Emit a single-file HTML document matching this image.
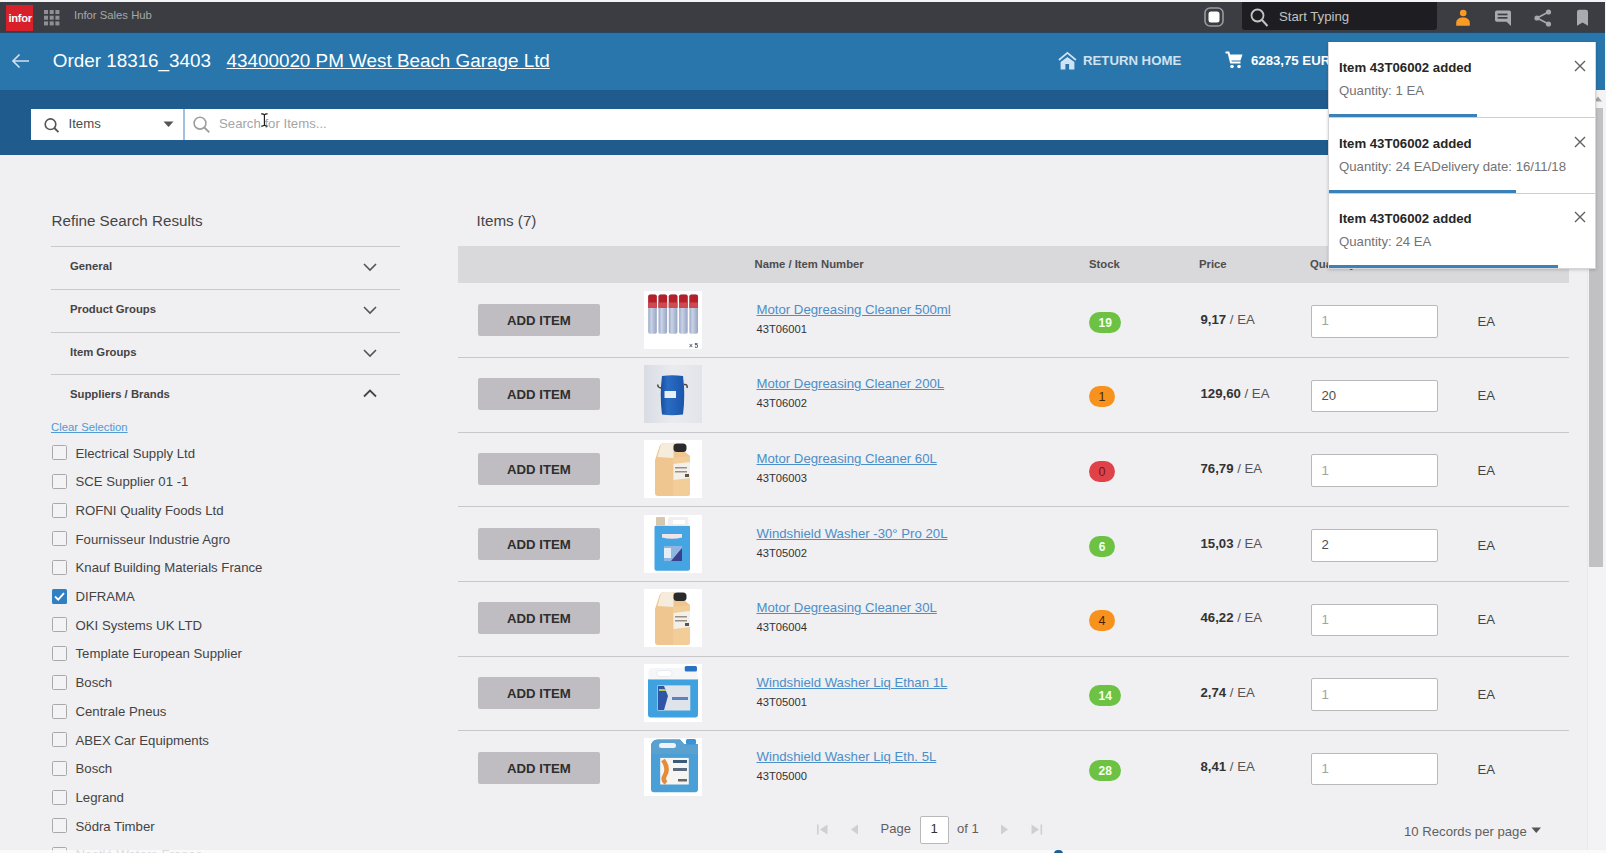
<!DOCTYPE html><html><head><meta charset="utf-8"><style>
*{box-sizing:border-box;margin:0;padding:0}
html,body{width:1606px;height:853px;overflow:hidden}
body{font-family:"Liberation Sans",sans-serif;background:#f0eff2;position:relative;color:#333}
.a{position:absolute}
.t{position:absolute;white-space:nowrap;line-height:1}
svg{position:absolute;overflow:visible}
</style></head><body>
<div class="a" style="left:0;top:0;width:1606px;height:2px;background:#f4f4f6"></div>
<div class="a" style="left:0;top:2px;width:1605px;height:30px;background:#3c3d42"></div>
<div class="a" style="left:6px;top:5px;width:27px;height:26px;background:#d8202a"></div>
<div class="t" style="left:8.5px;top:12.8px;font-size:11.2px;font-weight:bold;color:#fff;letter-spacing:-0.3px">infor</div>
<svg style="left:0;top:0" width="80" height="32"><rect x="44.0" y="10.0" width="4" height="4" fill="#8f8f94"/><rect x="44.0" y="15.7" width="4" height="4" fill="#8f8f94"/><rect x="44.0" y="21.4" width="4" height="4" fill="#8f8f94"/><rect x="49.7" y="10.0" width="4" height="4" fill="#8f8f94"/><rect x="49.7" y="15.7" width="4" height="4" fill="#8f8f94"/><rect x="49.7" y="21.4" width="4" height="4" fill="#8f8f94"/><rect x="55.4" y="10.0" width="4" height="4" fill="#8f8f94"/><rect x="55.4" y="15.7" width="4" height="4" fill="#8f8f94"/><rect x="55.4" y="21.4" width="4" height="4" fill="#8f8f94"/></svg>
<div class="t" style="left:74px;top:10px;font-size:11.3px;color:#a7a7ab">Infor Sales Hub</div>
<svg style="left:1204px;top:7px" width="21" height="21"><rect x="1" y="1" width="18" height="18" rx="5" fill="none" stroke="#9a9a9e" stroke-width="1.6"/><rect x="4.5" y="4.5" width="11" height="11" rx="2.5" fill="#fff"/></svg>
<div class="a" style="left:1242px;top:2px;width:195px;height:28px;background:#1e1e22;border-radius:0 0 3px 3px"></div>
<svg style="left:1250px;top:8px" width="20" height="20"><circle cx="7.5" cy="7.5" r="6" fill="none" stroke="#c4c4c4" stroke-width="1.8"/><line x1="12" y1="12" x2="17.5" y2="18" stroke="#c4c4c4" stroke-width="2"/></svg>
<div class="t" style="left:1279px;top:10px;font-size:13.2px;color:#c2c2c2">Start Typing</div>
<svg style="left:1455px;top:9px" width="16" height="17"><circle cx="8.2" cy="4" r="3.3" fill="#f99b25"/><path d="M1.2 16.8 V14 C1.2 10.5 4 8.6 8 8.6 C12 8.6 14.8 10.5 14.8 14 V16.8 Z" fill="#f99b25"/></svg>
<svg style="left:1495px;top:9.5px" width="17" height="17"><path d="M1.8 0.5 H14.2 Q16 0.5 16 2.3 V16 L11.5 11.8 H1.8 Q0 11.8 0 10 V2.3 Q0 0.5 1.8 0.5 Z" fill="#a9a9ae"/><rect x="2.7" y="3.6" width="9.8" height="1.7" fill="#3c3d42"/><rect x="2.7" y="7" width="9.8" height="1.7" fill="#3c3d42"/></svg>
<svg style="left:1534px;top:9px" width="18" height="18"><circle cx="14.5" cy="3" r="2.6" fill="#a7a7ab"/><circle cx="3" cy="9" r="2.6" fill="#a7a7ab"/><circle cx="14.5" cy="15" r="2.6" fill="#a7a7ab"/><path d="M3 9 L14.5 3 M3 9 L14.5 15" stroke="#a9a9ae" stroke-width="1.5"/></svg>
<svg style="left:1576px;top:9px" width="13" height="18"><path d="M1 3 Q1 0.8 3.2 0.8 H9.8 Q12 0.8 12 3 V16.8 L6.5 13.6 L1 16.8 Z" fill="#a9a9ae"/></svg>
<div class="a" style="left:1605px;top:0;width:1px;height:90px;background:#f4f4f6"></div>
<div class="a" style="left:0;top:32px;width:1605px;height:58px;background:#2876ab"></div>
<div class="a" style="left:0;top:31.6px;width:1605px;height:1px;background:#27465f"></div>
<svg style="left:11px;top:53px" width="20" height="16"><path d="M18 8 H2 M8.5 1.5 L2 8 L8.5 14.5" fill="none" stroke="#cfe0ef" stroke-width="1.7"/></svg>
<div class="t" style="left:52.8px;top:52.2px;font-size:18.85px;color:#fff">Order 18316_3403</div>
<div class="t" style="left:226.5px;top:52.2px;font-size:18.85px;color:#fff;text-decoration:underline">43400020 PM West Beach Garage Ltd</div>
<svg style="left:1058px;top:52px" width="19" height="19"><path d="M0.9 8 L9.4 0.9 L17.9 8" fill="none" stroke="#cfe3f5" stroke-width="1.7"/><path d="M2.6 10 L9.4 5 L16.4 10 V17.5 H11.1 V12 H7.4 V17.5 H2.6 Z" fill="#cfe3f5"/></svg>
<div class="t" style="left:1083px;top:54px;font-size:13.2px;font-weight:bold;color:#d0e2f2">RETURN HOME</div>
<svg style="left:1225px;top:51px" width="19" height="19"><path d="M0.5 1.5 H3.5 L6 11.5 H15.5" fill="none" stroke="#fff" stroke-width="2"/><path d="M4.2 3.5 H17.5 L15.5 9.5 H5.5 Z" fill="#fff"/><circle cx="7" cy="15.5" r="1.8" fill="#fff"/><circle cx="14" cy="15.5" r="1.8" fill="#fff"/></svg>
<div class="t" style="left:1251px;top:54px;font-size:13.2px;font-weight:bold;color:#fff">6283,75 EUR</div>
<div class="a" style="left:0;top:90px;width:1585px;height:65px;background:#1f5b8c"></div>
<div class="a" style="left:31px;top:109px;width:152px;height:30.5px;background:#fff"></div>
<svg style="left:44px;top:117.5px" width="18" height="16"><circle cx="6.5" cy="6.2" r="5.3" fill="none" stroke="#555" stroke-width="1.6"/><line x1="10.3" y1="10" x2="14.5" y2="14.2" stroke="#555" stroke-width="1.8"/></svg>
<div class="t" style="left:68.5px;top:116.5px;font-size:13.2px;color:#4a4a4a">Items</div>
<svg style="left:163px;top:121px" width="12" height="7"><path d="M0.5 0.5 H10.5 L5.5 6 Z" fill="#555"/></svg>
<div class="a" style="left:183px;top:109px;width:2px;height:30.5px;background:#9fc0de"></div>
<div class="a" style="left:185px;top:109px;width:1400px;height:30.5px;background:#fff"></div>
<svg style="left:193px;top:115.5px" width="20" height="18"><circle cx="7" cy="7.2" r="5.9" fill="none" stroke="#9d9d9d" stroke-width="1.6"/><line x1="11.3" y1="11.5" x2="16.3" y2="16.3" stroke="#9d9d9d" stroke-width="1.8"/></svg>
<div class="t" style="left:219px;top:116.5px;font-size:13.2px;color:#a5a5a5">Search for Items...</div>
<svg style="left:260px;top:113px" width="9" height="15"><path d="M1.2 0.9 Q3.3 0.6 4.4 1.8 Q5.5 0.6 7.6 0.9 M4.4 1.8 V12.2 M1.2 13.1 Q3.3 13.4 4.4 12.2 Q5.5 13.4 7.6 13.1" fill="none" stroke="#1a1a1a" stroke-width="1.15"/></svg>
<div class="t" style="left:51.5px;top:213px;font-size:15.2px;color:#454545">Refine Search Results</div>
<div class="a" style="left:51px;top:246px;width:349px;height:1px;background:#c9c9cc"></div>
<div class="a" style="left:51px;top:289px;width:349px;height:1px;background:#c9c9cc"></div>
<div class="a" style="left:51px;top:332px;width:349px;height:1px;background:#c9c9cc"></div>
<div class="a" style="left:51px;top:374px;width:349px;height:1px;background:#c9c9cc"></div>
<div class="t" style="left:70px;top:260.7px;font-size:11.3px;font-weight:bold;color:#444">General</div>
<svg style="left:363px;top:262.5px" width="15" height="9"><path d="M1 1 L7 7 L13 1" fill="none" stroke="#555" stroke-width="1.6"/></svg>
<div class="t" style="left:70px;top:304.2px;font-size:11.3px;font-weight:bold;color:#444">Product Groups</div>
<svg style="left:363px;top:306.0px" width="15" height="9"><path d="M1 1 L7 7 L13 1" fill="none" stroke="#555" stroke-width="1.6"/></svg>
<div class="t" style="left:70px;top:346.7px;font-size:11.3px;font-weight:bold;color:#444">Item Groups</div>
<svg style="left:363px;top:348.5px" width="15" height="9"><path d="M1 1 L7 7 L13 1" fill="none" stroke="#555" stroke-width="1.6"/></svg>
<div class="t" style="left:70px;top:388.7px;font-size:11.3px;font-weight:bold;color:#444">Suppliers / Brands</div>
<svg style="left:363px;top:389.0px" width="15" height="9"><path d="M1 7.5 L7 1.5 L13 7.5" fill="none" stroke="#444" stroke-width="1.8"/></svg>
<div class="t" style="left:51px;top:422px;font-size:11.3px;color:#529ad3;text-decoration:underline">Clear Selection</div>
<div class="a" style="left:52px;top:445.2px;width:15px;height:15px;border:1px solid #a9a9ac;border-radius:1.5px;background:#f3f3f5"></div>
<div class="t" style="left:75.5px;top:446.5px;font-size:13.2px;color:#434343">Electrical Supply Ltd</div>
<div class="a" style="left:52px;top:473.9px;width:15px;height:15px;border:1px solid #a9a9ac;border-radius:1.5px;background:#f3f3f5"></div>
<div class="t" style="left:75.5px;top:475.2px;font-size:13.2px;color:#434343">SCE Supplier 01 -1</div>
<div class="a" style="left:52px;top:502.6px;width:15px;height:15px;border:1px solid #a9a9ac;border-radius:1.5px;background:#f3f3f5"></div>
<div class="t" style="left:75.5px;top:503.9px;font-size:13.2px;color:#434343">ROFNI Quality Foods Ltd</div>
<div class="a" style="left:52px;top:531.3px;width:15px;height:15px;border:1px solid #a9a9ac;border-radius:1.5px;background:#f3f3f5"></div>
<div class="t" style="left:75.5px;top:532.6px;font-size:13.2px;color:#434343">Fournisseur Industrie Agro</div>
<div class="a" style="left:52px;top:560.0px;width:15px;height:15px;border:1px solid #a9a9ac;border-radius:1.5px;background:#f3f3f5"></div>
<div class="t" style="left:75.5px;top:561.3px;font-size:13.2px;color:#434343">Knauf Building Materials France</div>
<svg style="left:52px;top:588.7px" width="15" height="15"><rect x="0" y="0" width="15" height="15" rx="1.5" fill="#2f7fc1"/><path d="M3 7.5 L6.2 10.6 L12 4.2" fill="none" stroke="#fff" stroke-width="1.8"/></svg>
<div class="t" style="left:75.5px;top:590.0px;font-size:13.2px;color:#434343">DIFRAMA</div>
<div class="a" style="left:52px;top:617.4px;width:15px;height:15px;border:1px solid #a9a9ac;border-radius:1.5px;background:#f3f3f5"></div>
<div class="t" style="left:75.5px;top:618.7px;font-size:13.2px;color:#434343">OKI Systems UK LTD</div>
<div class="a" style="left:52px;top:646.1px;width:15px;height:15px;border:1px solid #a9a9ac;border-radius:1.5px;background:#f3f3f5"></div>
<div class="t" style="left:75.5px;top:647.4px;font-size:13.2px;color:#434343">Template European Supplier</div>
<div class="a" style="left:52px;top:674.8px;width:15px;height:15px;border:1px solid #a9a9ac;border-radius:1.5px;background:#f3f3f5"></div>
<div class="t" style="left:75.5px;top:676.1px;font-size:13.2px;color:#434343">Bosch</div>
<div class="a" style="left:52px;top:703.5px;width:15px;height:15px;border:1px solid #a9a9ac;border-radius:1.5px;background:#f3f3f5"></div>
<div class="t" style="left:75.5px;top:704.8px;font-size:13.2px;color:#434343">Centrale Pneus</div>
<div class="a" style="left:52px;top:732.2px;width:15px;height:15px;border:1px solid #a9a9ac;border-radius:1.5px;background:#f3f3f5"></div>
<div class="t" style="left:75.5px;top:733.5px;font-size:13.2px;color:#434343">ABEX Car Equipments</div>
<div class="a" style="left:52px;top:760.9px;width:15px;height:15px;border:1px solid #a9a9ac;border-radius:1.5px;background:#f3f3f5"></div>
<div class="t" style="left:75.5px;top:762.2px;font-size:13.2px;color:#434343">Bosch</div>
<div class="a" style="left:52px;top:789.6px;width:15px;height:15px;border:1px solid #a9a9ac;border-radius:1.5px;background:#f3f3f5"></div>
<div class="t" style="left:75.5px;top:790.9px;font-size:13.2px;color:#434343">Legrand</div>
<div class="a" style="left:52px;top:818.3px;width:15px;height:15px;border:1px solid #a9a9ac;border-radius:1.5px;background:#f3f3f5"></div>
<div class="t" style="left:75.5px;top:819.6px;font-size:13.2px;color:#434343">Södra Timber</div>
<div class="a" style="left:52px;top:847.0px;width:15px;height:15px;border:1px solid #a9a9ac;border-radius:1.5px;background:#f3f3f5"></div>
<div class="t" style="left:75.5px;top:848.3px;font-size:13.2px;color:#434343">Nestlé Waters France</div>
<div class="t" style="left:476.5px;top:212.5px;font-size:15.2px;color:#454545">Items (7)</div>
<div class="a" style="left:457.5px;top:246px;width:1111.5px;height:36.5px;background:#d9d8db"></div>
<div class="t" style="left:754.5px;top:258.5px;font-size:11.3px;font-weight:bold;color:#4d4d4d">Name / Item Number</div>
<div class="t" style="left:1089px;top:258.5px;font-size:11.3px;font-weight:bold;color:#4d4d4d">Stock</div>
<div class="t" style="left:1199px;top:258.5px;font-size:11.3px;font-weight:bold;color:#4d4d4d">Price</div>
<div class="t" style="left:1310px;top:258.5px;font-size:11.3px;font-weight:bold;color:#4d4d4d">Quantity</div>
<div class="a" style="left:457.5px;top:357.0px;width:1111.5px;height:1px;background:#c8c8cb"></div>
<div class="a" style="left:477.5px;top:303.7px;width:122.5px;height:32px;background:#bfbdc1;border-radius:2px"></div>
<div class="t" style="left:507px;top:313.7px;font-size:13.2px;font-weight:bold;color:#2e2e2e">ADD ITEM</div>
<svg style="left:644px;top:290.5px;filter:blur(0.35px)" width="58" height="58"><rect width="58" height="58" fill="#fff"/><defs><linearGradient id="cg" x1="0" x2="1"><stop offset="0" stop-color="#9aa8c8"/><stop offset=".35" stop-color="#c9d2e6"/><stop offset="1" stop-color="#97a5c4"/></linearGradient></defs><rect x="4.2" y="3.4" width="8.6" height="39.3" rx="1.8" fill="url(#cg)"/><path d="M4.2 16.7 V5.6 Q4.2 3.4 6.4 3.4 H10.6 Q12.8 3.4 12.8 5.6 V16.7 Z" fill="#b52029"/><rect x="4.2" y="11.5" width="8.6" height="5.2" fill="#cf4a50"/><rect x="14.5" y="3.4" width="8.6" height="39.3" rx="1.8" fill="url(#cg)"/><path d="M14.5 16.7 V5.6 Q14.5 3.4 16.7 3.4 H20.9 Q23.1 3.4 23.1 5.6 V16.7 Z" fill="#b52029"/><rect x="14.5" y="11.5" width="8.6" height="5.2" fill="#cf4a50"/><rect x="24.8" y="3.4" width="8.6" height="39.3" rx="1.8" fill="url(#cg)"/><path d="M24.8 16.7 V5.6 Q24.8 3.4 27.0 3.4 H31.2 Q33.4 3.4 33.4 5.6 V16.7 Z" fill="#b52029"/><rect x="24.8" y="11.5" width="8.6" height="5.2" fill="#cf4a50"/><rect x="35.1" y="3.4" width="8.6" height="39.3" rx="1.8" fill="url(#cg)"/><path d="M35.1 16.7 V5.6 Q35.1 3.4 37.3 3.4 H41.5 Q43.7 3.4 43.7 5.6 V16.7 Z" fill="#b52029"/><rect x="35.1" y="11.5" width="8.6" height="5.2" fill="#cf4a50"/><rect x="45.4" y="3.4" width="8.6" height="39.3" rx="1.8" fill="url(#cg)"/><path d="M45.4 16.7 V5.6 Q45.4 3.4 47.6 3.4 H51.8 Q54.0 3.4 54.0 5.6 V16.7 Z" fill="#b52029"/><rect x="45.4" y="11.5" width="8.6" height="5.2" fill="#cf4a50"/><text x="45" y="57" font-size="6.5" fill="#4d5d76" font-family="Liberation Sans" font-weight="bold">× 5</text></svg>
<div class="t" style="left:756.5px;top:302.5px;font-size:13.2px;color:#4b8ec8;text-decoration:underline">Motor Degreasing Cleaner 500ml</div>
<div class="t" style="left:756.5px;top:323.5px;font-size:11.2px;color:#333">43T06001</div>
<div class="a" style="left:1089.3px;top:311.8px;width:32px;height:21px;border-radius:10.5px;background:#6ec243"></div>
<div class="t" style="left:1089.3px;top:316.6px;width:32px;text-align:center;font-size:12px;font-weight:bold;color:#f4fff0">19</div>
<div class="t" style="left:1200.5px;top:312.5px;font-size:13.2px;color:#555"><b style="color:#333">9,17</b> / EA</div>
<div class="a" style="left:1311px;top:305.0px;width:127px;height:32.5px;background:#fff;border:1px solid #b9b9bc;border-radius:2px"></div>
<div class="t" style="left:1321.5px;top:314.2px;font-size:13.2px;color:#a3a3a3">1</div>
<div class="t" style="left:1477.5px;top:314.7px;font-size:13.2px;color:#444">EA</div>
<div class="a" style="left:457.5px;top:431.6px;width:1111.5px;height:1px;background:#c8c8cb"></div>
<div class="a" style="left:477.5px;top:378.3px;width:122.5px;height:32px;background:#bfbdc1;border-radius:2px"></div>
<div class="t" style="left:507px;top:388.3px;font-size:13.2px;font-weight:bold;color:#2e2e2e">ADD ITEM</div>
<svg style="left:644px;top:365.1px;filter:blur(0.35px)" width="58" height="58"><rect width="58" height="58" fill="#fff"/><defs><linearGradient id="bg1" x1="0" x2="1"><stop offset="0" stop-color="#d9dce3"/><stop offset=".5" stop-color="#e9ebef"/><stop offset="1" stop-color="#e2e4e9"/></linearGradient><linearGradient id="bb" x1="0" x2="1"><stop offset="0" stop-color="#1a4fa0"/><stop offset=".3" stop-color="#2a6cc4"/><stop offset="1" stop-color="#1a56ab"/></linearGradient></defs><rect x="0" y="0" width="58" height="58" fill="url(#bg1)"/><path d="M18 11 Q28 9.5 39 11 Q41.5 30 39 49.5 Q28 51 18 49.5 Q15.5 30 18 11 Z" fill="url(#bb)"/><path d="M17 23 Q13 22 14 19.5 M40 19.5 Q44 19 43 23" stroke="#444" stroke-width="1.5" fill="none"/><rect x="20.5" y="26" width="11.5" height="7" fill="#e8eef6"/></svg>
<div class="t" style="left:756.5px;top:377.1px;font-size:13.2px;color:#4b8ec8;text-decoration:underline">Motor Degreasing Cleaner 200L</div>
<div class="t" style="left:756.5px;top:398.1px;font-size:11.2px;color:#333">43T06002</div>
<div class="a" style="left:1089.3px;top:386.4px;width:25.5px;height:21px;border-radius:10.5px;background:#f7921e"></div>
<div class="t" style="left:1089.3px;top:391.0px;width:25.5px;text-align:center;font-size:12.5px;color:#4a2300">1</div>
<div class="t" style="left:1200.5px;top:387.1px;font-size:13.2px;color:#555"><b style="color:#333">129,60</b> / EA</div>
<div class="a" style="left:1311px;top:379.6px;width:127px;height:32.5px;background:#fff;border:1px solid #b9b9bc;border-radius:2px"></div>
<div class="t" style="left:1321.5px;top:388.8px;font-size:13.2px;color:#4f4f4f">20</div>
<div class="t" style="left:1477.5px;top:389.3px;font-size:13.2px;color:#444">EA</div>
<div class="a" style="left:457.5px;top:506.3px;width:1111.5px;height:1px;background:#c8c8cb"></div>
<div class="a" style="left:477.5px;top:453.0px;width:122.5px;height:32px;background:#bfbdc1;border-radius:2px"></div>
<div class="t" style="left:507px;top:463.0px;font-size:13.2px;font-weight:bold;color:#2e2e2e">ADD ITEM</div>
<svg style="left:644px;top:439.8px;filter:blur(0.35px)" width="58" height="58"><rect width="58" height="58" fill="#fff"/><rect x="0" y="0" width="58" height="58" fill="#fff"/><path d="M11 20 L15 8 Q16 3 21 3 H30 L46 16 V53 Q46 56 43 56 H14 Q11 56 11 53 Z" fill="#efc68f"/><path d="M13.5 17 L16.5 6 Q17.5 3 21 3 H29.5 V18 Z" fill="#f6ecdc"/><path d="M29 18 L46 16 V53 Q46 56 43 56 H29 Z" fill="#f3cd98"/><rect x="29.5" y="3.5" width="13" height="8.5" rx="3.5" fill="#2a2a2a"/><path d="M29.5 24 L46 22 V38 L29.5 40 Z" fill="#f3f0ea"/><rect x="31" y="27" width="12" height="1.5" fill="#9a8f86"/><rect x="31" y="31" width="12" height="1.5" fill="#9a8f86"/><rect x="41" y="34" width="4" height="3" fill="#555"/></svg>
<div class="t" style="left:756.5px;top:451.8px;font-size:13.2px;color:#4b8ec8;text-decoration:underline">Motor Degreasing Cleaner 60L</div>
<div class="t" style="left:756.5px;top:472.8px;font-size:11.2px;color:#333">43T06003</div>
<div class="a" style="left:1089.3px;top:461.1px;width:25.5px;height:21px;border-radius:10.5px;background:#e0424a"></div>
<div class="t" style="left:1089.3px;top:465.7px;width:25.5px;text-align:center;font-size:12.5px;color:#7a1419">0</div>
<div class="t" style="left:1200.5px;top:461.8px;font-size:13.2px;color:#555"><b style="color:#333">76,79</b> / EA</div>
<div class="a" style="left:1311px;top:454.3px;width:127px;height:32.5px;background:#fff;border:1px solid #b9b9bc;border-radius:2px"></div>
<div class="t" style="left:1321.5px;top:463.5px;font-size:13.2px;color:#a3a3a3">1</div>
<div class="t" style="left:1477.5px;top:464.0px;font-size:13.2px;color:#444">EA</div>
<div class="a" style="left:457.5px;top:581.0px;width:1111.5px;height:1px;background:#c8c8cb"></div>
<div class="a" style="left:477.5px;top:527.7px;width:122.5px;height:32px;background:#bfbdc1;border-radius:2px"></div>
<div class="t" style="left:507px;top:537.7px;font-size:13.2px;font-weight:bold;color:#2e2e2e">ADD ITEM</div>
<svg style="left:644px;top:514.5px;filter:blur(0.35px)" width="58" height="58"><rect width="58" height="58" fill="#fff"/><rect x="0" y="0" width="58" height="58" fill="#fff"/><path d="M10.5 12 Q10.5 10.7 12 10.7 H45 Q46 10.7 46 12 V53.5 Q46 55.7 44 55.7 H12.5 Q10.5 55.7 10.5 53.5 Z" fill="#45a4e2"/><rect x="12" y="2" width="9" height="8.7" rx="1" fill="#d6c7ad"/><path d="M24 10.7 V4 Q24 2 26 2 H42 Q44.5 2 44.5 4 V10.7 Z" fill="#f1eeee"/><rect x="29" y="5" width="12" height="4" fill="#fff"/><path d="M18 19 H38 V22.5 Q28 25 18 22.5 Z" fill="#f0e4e8"/><rect x="20" y="31" width="18" height="15" fill="#8fb6e0"/><path d="M27 46 L38 33 V46 Z" fill="#3a3f8e"/><rect x="20" y="33" width="7" height="10" fill="#e5edf6"/></svg>
<div class="t" style="left:756.5px;top:526.5px;font-size:13.2px;color:#4b8ec8;text-decoration:underline">Windshield Washer -30° Pro 20L</div>
<div class="t" style="left:756.5px;top:547.5px;font-size:11.2px;color:#333">43T05002</div>
<div class="a" style="left:1089.3px;top:535.8px;width:25.5px;height:21px;border-radius:10.5px;background:#6ec243"></div>
<div class="t" style="left:1089.3px;top:540.6px;width:25.5px;text-align:center;font-size:12px;font-weight:bold;color:#f4fff0">6</div>
<div class="t" style="left:1200.5px;top:536.5px;font-size:13.2px;color:#555"><b style="color:#333">15,03</b> / EA</div>
<div class="a" style="left:1311px;top:529.0px;width:127px;height:32.5px;background:#fff;border:1px solid #b9b9bc;border-radius:2px"></div>
<div class="t" style="left:1321.5px;top:538.2px;font-size:13.2px;color:#4f4f4f">2</div>
<div class="t" style="left:1477.5px;top:538.7px;font-size:13.2px;color:#444">EA</div>
<div class="a" style="left:457.5px;top:655.6px;width:1111.5px;height:1px;background:#c8c8cb"></div>
<div class="a" style="left:477.5px;top:602.3px;width:122.5px;height:32px;background:#bfbdc1;border-radius:2px"></div>
<div class="t" style="left:507px;top:612.3px;font-size:13.2px;font-weight:bold;color:#2e2e2e">ADD ITEM</div>
<svg style="left:644px;top:589.1px;filter:blur(0.35px)" width="58" height="58"><rect width="58" height="58" fill="#fff"/><rect x="0" y="0" width="58" height="58" fill="#fff"/><path d="M11 20 L15 8 Q16 3 21 3 H30 L46 16 V53 Q46 56 43 56 H14 Q11 56 11 53 Z" fill="#efc68f"/><path d="M13.5 17 L16.5 6 Q17.5 3 21 3 H29.5 V18 Z" fill="#f6ecdc"/><path d="M29 18 L46 16 V53 Q46 56 43 56 H29 Z" fill="#f3cd98"/><rect x="29.5" y="3.5" width="13" height="8.5" rx="3.5" fill="#2a2a2a"/><path d="M29.5 24 L46 22 V38 L29.5 40 Z" fill="#f3f0ea"/><rect x="31" y="27" width="12" height="1.5" fill="#9a8f86"/><rect x="31" y="31" width="12" height="1.5" fill="#9a8f86"/><rect x="41" y="34" width="4" height="3" fill="#555"/></svg>
<div class="t" style="left:756.5px;top:601.1px;font-size:13.2px;color:#4b8ec8;text-decoration:underline">Motor Degreasing Cleaner 30L</div>
<div class="t" style="left:756.5px;top:622.1px;font-size:11.2px;color:#333">43T06004</div>
<div class="a" style="left:1089.3px;top:610.4px;width:25.5px;height:21px;border-radius:10.5px;background:#f7921e"></div>
<div class="t" style="left:1089.3px;top:615.0px;width:25.5px;text-align:center;font-size:12.5px;color:#4a2300">4</div>
<div class="t" style="left:1200.5px;top:611.1px;font-size:13.2px;color:#555"><b style="color:#333">46,22</b> / EA</div>
<div class="a" style="left:1311px;top:603.6px;width:127px;height:32.5px;background:#fff;border:1px solid #b9b9bc;border-radius:2px"></div>
<div class="t" style="left:1321.5px;top:612.8px;font-size:13.2px;color:#a3a3a3">1</div>
<div class="t" style="left:1477.5px;top:613.3px;font-size:13.2px;color:#444">EA</div>
<div class="a" style="left:457.5px;top:730.2px;width:1111.5px;height:1px;background:#c8c8cb"></div>
<div class="a" style="left:477.5px;top:677.0px;width:122.5px;height:32px;background:#bfbdc1;border-radius:2px"></div>
<div class="t" style="left:507px;top:687.0px;font-size:13.2px;font-weight:bold;color:#2e2e2e">ADD ITEM</div>
<svg style="left:644px;top:663.8px;filter:blur(0.35px)" width="58" height="58"><rect width="58" height="58" fill="#fff"/><rect x="0" y="0" width="58" height="58" fill="#fff"/><path d="M4 15.3 H54 V51 Q54 53.4 51.5 53.4 H6.5 Q4 53.4 4 51 Z" fill="#3fa1dd"/><path d="M4.5 15.3 V8 Q4.5 4 9 4 H40 V7 H53.5 V15.3 Z" fill="#f4f6f8"/><rect x="13" y="6.5" width="15" height="6" rx="3" fill="#ffffff" stroke="#e3e7ec" stroke-width=".8"/><rect x="40.7" y="2" width="12.3" height="5.5" rx="1.5" fill="#2a72c2"/><rect x="13.5" y="21.4" width="32.8" height="25.1" fill="#dfe4ea"/><path d="M14 22 H20 L24 32 L20 46 H14 Z" fill="#2e55a6"/><rect x="15" y="25" width="7" height="2" fill="#b9c94a"/><rect x="28" y="33" width="16" height="3" fill="#5f7fc0"/></svg>
<div class="t" style="left:756.5px;top:675.8px;font-size:13.2px;color:#4b8ec8;text-decoration:underline">Windshield Washer Liq Ethan 1L</div>
<div class="t" style="left:756.5px;top:696.8px;font-size:11.2px;color:#333">43T05001</div>
<div class="a" style="left:1089.3px;top:685.0px;width:32px;height:21px;border-radius:10.5px;background:#6ec243"></div>
<div class="t" style="left:1089.3px;top:689.9px;width:32px;text-align:center;font-size:12px;font-weight:bold;color:#f4fff0">14</div>
<div class="t" style="left:1200.5px;top:685.8px;font-size:13.2px;color:#555"><b style="color:#333">2,74</b> / EA</div>
<div class="a" style="left:1311px;top:678.2px;width:127px;height:32.5px;background:#fff;border:1px solid #b9b9bc;border-radius:2px"></div>
<div class="t" style="left:1321.5px;top:687.5px;font-size:13.2px;color:#a3a3a3">1</div>
<div class="t" style="left:1477.5px;top:688.0px;font-size:13.2px;color:#444">EA</div>
<div class="a" style="left:477.5px;top:751.6px;width:122.5px;height:32px;background:#bfbdc1;border-radius:2px"></div>
<div class="t" style="left:507px;top:761.6px;font-size:13.2px;font-weight:bold;color:#2e2e2e">ADD ITEM</div>
<svg style="left:644px;top:738.4px;filter:blur(0.35px)" width="58" height="58"><rect width="58" height="58" fill="#fff"/><rect x="0" y="0" width="58" height="58" fill="#fff"/><path d="M7 9 Q7 1.5 14 1.5 H36 L40 6 H54 V51 Q54 54.2 51 54.2 H10 Q7 54.2 7 51 Z" fill="#4a9fd6"/><path d="M7 9 Q7 1.5 14 1.5 H36 L40 6 H54 V16 H7 Z" fill="#5aa1cf"/><rect x="15" y="5" width="17" height="5" rx="2.5" fill="#eef3f7"/><rect x="42" y="1" width="10" height="5.5" rx="1.5" fill="#3a92d8"/><rect x="16.2" y="19.9" width="28.6" height="26.6" fill="#f7f5f1"/><path d="M19 22 Q25 30 21 37 Q18 42 22 45" stroke="#e58c3c" stroke-width="4.5" fill="none"/><rect x="29" y="22" width="14" height="3" fill="#3a5a7a"/><rect x="29" y="30" width="14" height="3" fill="#5a6a7a"/><rect x="34" y="41" width="9" height="2.5" fill="#666"/></svg>
<div class="t" style="left:756.5px;top:750.4px;font-size:13.2px;color:#4b8ec8;text-decoration:underline">Windshield Washer Liq Eth. 5L</div>
<div class="t" style="left:756.5px;top:771.4px;font-size:11.2px;color:#333">43T05000</div>
<div class="a" style="left:1089.3px;top:759.7px;width:32px;height:21px;border-radius:10.5px;background:#6ec243"></div>
<div class="t" style="left:1089.3px;top:764.5px;width:32px;text-align:center;font-size:12px;font-weight:bold;color:#f4fff0">28</div>
<div class="t" style="left:1200.5px;top:760.4px;font-size:13.2px;color:#555"><b style="color:#333">8,41</b> / EA</div>
<div class="a" style="left:1311px;top:752.9px;width:127px;height:32.5px;background:#fff;border:1px solid #b9b9bc;border-radius:2px"></div>
<div class="t" style="left:1321.5px;top:762.1px;font-size:13.2px;color:#a3a3a3">1</div>
<div class="t" style="left:1477.5px;top:762.6px;font-size:13.2px;color:#444">EA</div>
<svg style="left:816px;top:822.6px" width="240" height="14"><rect x="1" y="1.5" width="1.6" height="10" fill="#cfcfd2"/><path d="M11.5 1.5 V11.5 L4 6.5 Z" fill="#cfcfd2"/><path d="M42 1.5 V11.5 L35 6.5 Z" fill="#cfcfd2"/><path d="M185 1.5 V11.5 L192 6.5 Z" fill="#cfcfd2"/><path d="M215.5 1.5 V11.5 L223 6.5 Z" fill="#cfcfd2"/><rect x="224.5" y="1.5" width="1.6" height="10" fill="#cfcfd2"/></svg>
<div class="t" style="left:880.5px;top:822px;font-size:13px;color:#5f5f5f">Page</div>
<div class="a" style="left:920px;top:815.5px;width:28.5px;height:28px;background:#fff;border:1px solid #b9b9bc;border-radius:2px"></div>
<div class="t" style="left:930.5px;top:821.6px;font-size:13.2px;color:#333">1</div>
<div class="t" style="left:957px;top:822px;font-size:13px;color:#5f5f5f">of 1</div>
<div class="t" style="left:1404px;top:824.5px;font-size:13.15px;color:#5f5f5f">10 Records per page</div>
<svg style="left:1530.5px;top:826.8px" width="11" height="7"><path d="M0.5 0.5 H10 L5.25 6 Z" fill="#555"/></svg>
<div class="a" style="left:1586.5px;top:90px;width:19.5px;height:759.6px;background:#f3f3f5;border-left:1px solid #e9e9eb"></div>
<div class="a" style="left:1589px;top:108px;width:14px;height:459px;background:#c1c1c3"></div>
<svg style="left:1593px;top:95px" width="10" height="8"><path d="M1 6.5 L5 1.5 L9 6.5 Z" fill="#a3a3a3"/></svg>
<div class="a" style="left:0;top:849.6px;width:1606px;height:4px;background:rgba(252,252,253,0.82)"></div>
<div class="a" style="left:1054px;top:849.6px;width:9px;height:5px;border-radius:4px 4px 0 0;background:#1f5e94"></div>
<div class="a" style="left:1328px;top:42px;width:267.5px;height:226.5px;background:#fff;box-shadow:0 1px 3px rgba(0,0,0,.18);border:1px solid #d6d6d8;border-top:none"></div>
<div class="t" style="left:1339px;top:61.2px;font-size:13.2px;font-weight:bold;color:#262626">Item 43T06002 added</div>
<div class="t" style="left:1339px;top:84.2px;font-size:13.2px;color:#737373">Quantity: 1 EA</div>
<svg style="left:1574px;top:60.2px" width="12" height="12"><path d="M1 1 L11 11 M11 1 L1 11" stroke="#606060" stroke-width="1.35"/></svg>
<div class="a" style="left:1329px;top:114.0px;width:148px;height:3px;background:#3a80b9"></div>
<div class="a" style="left:1329px;top:117.0px;width:266px;height:1px;background:#cfcfd2"></div>
<div class="t" style="left:1339px;top:136.8px;font-size:13.2px;font-weight:bold;color:#262626">Item 43T06002 added</div>
<div class="t" style="left:1339px;top:159.8px;font-size:13.2px;color:#737373">Quantity: 24 EADelivery date: 16/11/18</div>
<svg style="left:1574px;top:135.8px" width="12" height="12"><path d="M1 1 L11 11 M11 1 L1 11" stroke="#606060" stroke-width="1.35"/></svg>
<div class="a" style="left:1329px;top:189.6px;width:187px;height:3px;background:#3a80b9"></div>
<div class="a" style="left:1329px;top:192.6px;width:266px;height:1px;background:#cfcfd2"></div>
<div class="t" style="left:1339px;top:212.4px;font-size:13.2px;font-weight:bold;color:#262626">Item 43T06002 added</div>
<div class="t" style="left:1339px;top:235.4px;font-size:13.2px;color:#737373">Quantity: 24 EA</div>
<svg style="left:1574px;top:211.4px" width="12" height="12"><path d="M1 1 L11 11 M11 1 L1 11" stroke="#606060" stroke-width="1.35"/></svg>
<div class="a" style="left:1329px;top:265.2px;width:229px;height:3px;background:#3a80b9"></div>
</body></html>
